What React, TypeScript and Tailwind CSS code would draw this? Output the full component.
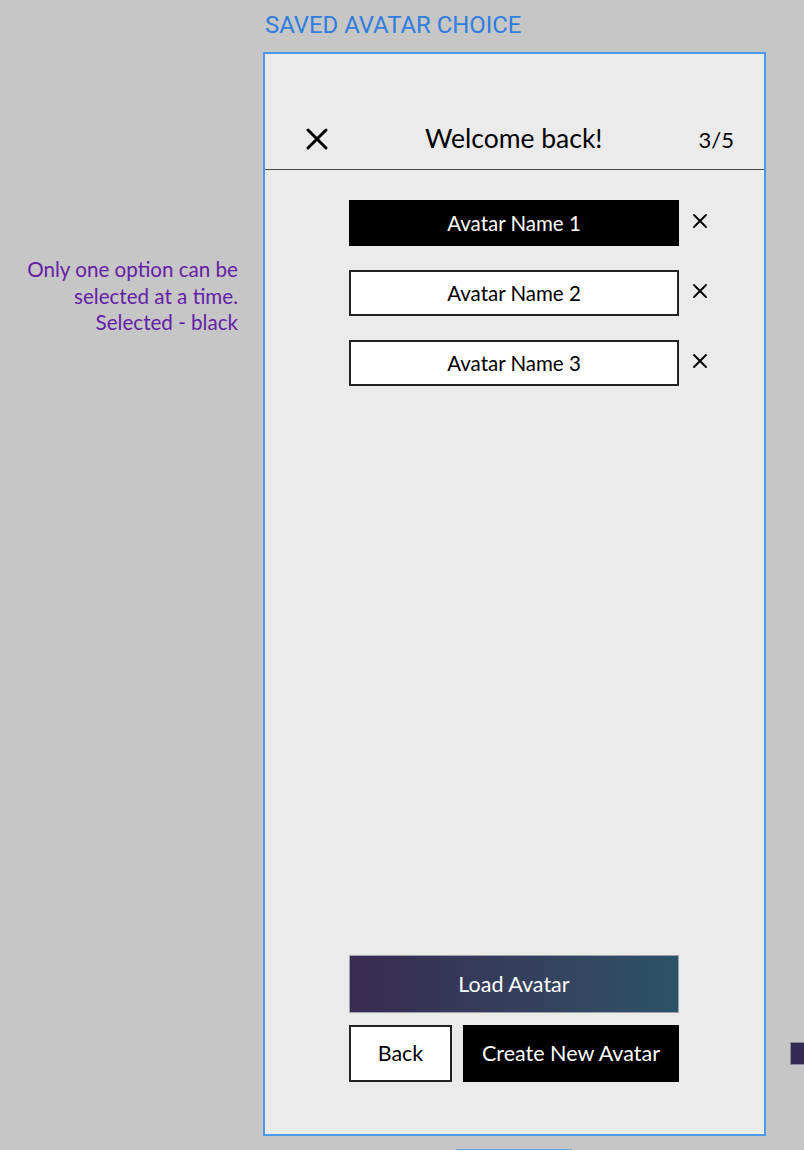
import React, { useState } from 'react';

const avatars = ['Avatar Name 1', 'Avatar Name 2', 'Avatar Name 3'];

const CloseIcon: React.FC<{ size: number; stroke: number }> = ({ size, stroke }) => (
    <svg width={size} height={size} viewBox="0 0 24 24" fill="none" stroke="#000" strokeWidth={stroke} strokeLinecap="round">
        <path d="M3 3L21 21M21 3L3 21" />
    </svg>
);

const App: React.FC = () => {
    const [selected, setSelected] = useState(0);

    return (
        <div className="relative w-[804px] h-[1150px] overflow-hidden bg-[#c6c6c6] flex" style={{ fontFamily: 'Lato, "Open Sans", sans-serif' }}>
            {/* annotation column */}
            <div className="w-[263px] shrink-0 pt-[256px] pr-[25px]">
                <p className="text-right text-[20.6px] leading-[26.5px] text-[#6420a6]">
                    Only one option can be<br />
                    selected at a time.<br />
                    Selected - black
                </p>
            </div>

            {/* screen */}
            <div className="flex flex-col">
                <h1 className="h-[52px] pt-[11px] text-[23.9px] leading-[28px] text-[#2f7de0] pl-[2px]" style={{ fontFamily: 'Roboto, sans-serif' }}>
                    SAVED AVATAR CHOICE
                </h1>
                <div className="w-[503px] h-[1084px] border-2 border-[#4a9af2] bg-[#ebebeb] flex flex-col">
                    <div className="pt-[55px] border-b-[1.5px] border-[#4a4a4a]">
                        <div className="h-[60px] flex items-center justify-between pl-[40px] pr-[30px]">
                            <CloseIcon size={24} stroke={3} />
                            <span className="text-[26.5px] text-black">Welcome back!</span>
                            <span className="text-[22px] text-black">3/5</span>
                        </div>
                    </div>

                    <div className="flex flex-col gap-[24px] pt-[30px] pl-[84px]">
                        {avatars.map((name, i) => (
                            <div key={name} className="flex items-center gap-[13px]">
                                <button
                                    onClick={() => setSelected(i)}
                                    className={`w-[330px] h-[46px] text-[20.5px] border-2 ${selected === i ? 'bg-black text-white border-black' : 'bg-white text-black border-[#222]'}`}
                                >
                                    {name}
                                </button>
                                <div className="-mt-[4px]">
                                    <CloseIcon size={16} stroke={2.8} />
                                </div>
                            </div>
                        ))}
                    </div>

                    <div className="mt-auto pb-[52px] pl-[84px] flex flex-col gap-[12px]">
                        <button className="w-[330px] h-[58px] text-[21.5px] text-white border border-[#9aa3ab] bg-gradient-to-r from-[#382b51] to-[#2c5267]">
                            Load Avatar
                        </button>
                        <div className="flex gap-[11px]">
                            <button className="w-[103px] h-[57px] bg-white border-2 border-[#222] text-[21.5px] text-black">Back</button>
                            <button className="w-[216px] h-[57px] bg-black text-[21.5px] text-white">Create New Avatar</button>
                        </div>
                    </div>
                </div>
            </div>

            {/* neighbouring frames peeking in at the edges */}
            <div className="absolute left-[790px] top-[1042px] w-[20px] h-[23px] bg-[#322a50] border border-[#8a8a9a]" />
            <div className="absolute left-[456px] top-[1149px] w-[116px] h-[4px] bg-[#6aa6e0]" />
        </div>
    );
};

export default App;
